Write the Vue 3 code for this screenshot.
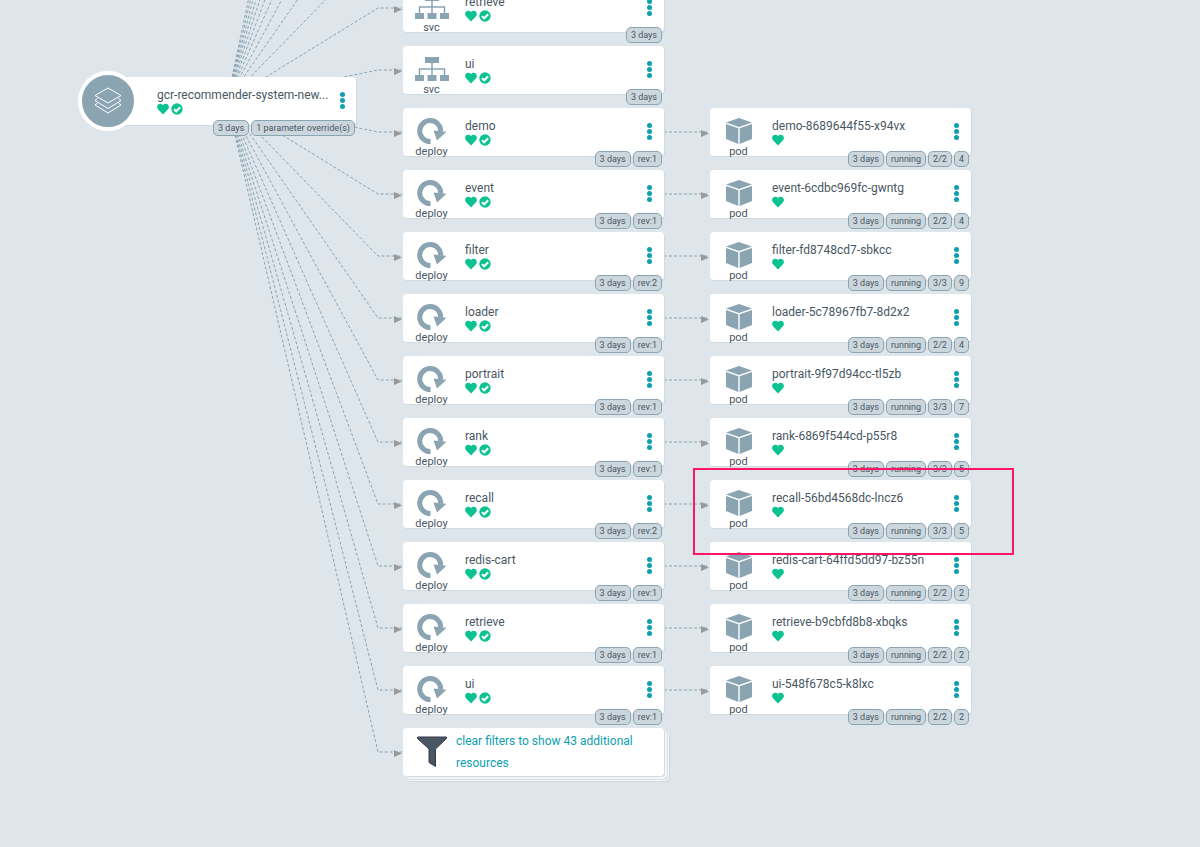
<script setup>
const rowHeight = 62
const origin = { x: 227, y: 101 }
const bend = 378
const links = Array.from({ length: 23 }, (_, i) => {
  const y = 8 + (i - 10) * rowHeight
  return { y, points: `${origin.x},${origin.y} ${bend},${y} 402,${y}` }
})

const services = [
  { name: 'retrieve', tags: ['3 days'] },
  { name: 'ui', tags: ['3 days'] },
].map((s) => ({ ...s, kind: 'svc', synced: true }))

const deployments = [
  ['demo', 1],
  ['event', 1],
  ['filter', 2],
  ['loader', 1],
  ['portrait', 1],
  ['rank', 1],
  ['recall', 2],
  ['redis-cart', 1],
  ['retrieve', 1],
  ['ui', 1],
].map(([name, rev]) => ({ name, kind: 'deploy', synced: true, tags: ['3 days', `rev:${rev}`] }))

const resources = [...services, ...deployments]

const pods = [
  ['demo-8689644f55-x94vx', '2/2', '4'],
  ['event-6cdbc969fc-gwntg', '2/2', '4'],
  ['filter-fd8748cd7-sbkcc', '3/3', '9'],
  ['loader-5c78967fb7-8d2x2', '2/2', '4'],
  ['portrait-9f97d94cc-tl5zb', '3/3', '7'],
  ['rank-6869f544cd-p55r8', '3/3', '5'],
  ['recall-56bd4568dc-lncz6', '3/3', '5'],
  ['redis-cart-64ffd5dd97-bz55n', '2/2', '2'],
  ['retrieve-b9cbfd8b8-xbqks', '2/2', '2'],
  ['ui-548f678c5-k8lxc', '2/2', '2'],
].map(([name, ready, restarts]) => ({
  name,
  kind: 'pod',
  synced: false,
  tags: ['3 days', 'running', ready, restarts],
}))

const columns = [
  { id: 'resources', nodes: resources },
  { id: 'pods', nodes: pods },
]
</script>

<template>
  <main class="tree">
    <svg class="links" width="720" height="847" aria-hidden="true">
      <g v-for="link in links" :key="link.y">
        <polyline class="link" :points="link.points" />
        <path class="arrow" :d="`M394 ${link.y - 2}l8 3.500l-8 3.500z`" />
      </g>
      <g v-for="(pod, i) in pods" :key="pod.name">
        <path class="link" :d="`M664 ${132 + i * rowHeight}H709`" />
        <path class="arrow" :d="`M701 ${130 + i * rowHeight}l8 3.500l-8 3.500z`" />
      </g>
    </svg>

    <article class="node app">
      <span class="app-icon">
        <svg width="30" height="30" viewBox="0 0 30 30" aria-hidden="true">
          <g fill="none" stroke="#fff" stroke-linejoin="round">
            <path d="M15 2L28 9.500L15 17L2 9.500z" />
            <path d="M4.500 12.500L2 14.500L15 22.500L28 14.500L25.500 12.500" />
            <path d="M4.500 17L2 19L15 27L28 19L25.500 17" />
          </g>
        </svg>
      </span>
      <div class="body">
        <span class="name">gcr-recommender-system-new...</span>
        <span class="status">
          <svg width="12" height="12" viewBox="0 0 12 12" role="img" aria-label="Healthy"><path class="ok" d="M6 11.400L1 6.300C-.4 4.700 0 2.300 1.500 1.300C3 .3 4.800.7 6 2.200C7.200.7 9 .3 10.500 1.300C12 2.300 12.400 4.700 11 6.300z" /></svg>
          <svg width="12" height="12" viewBox="0 0 12 12" role="img" aria-label="Synced"><circle class="ok" cx="6" cy="6" r="5.700" /><path class="tick" d="M3 6.200L5.200 8.300L9.200 4.200" /></svg>
        </span>
      </div>
      <button class="menu" aria-label="Application actions"><i></i><i></i><i></i></button>
      <div class="tags"><span>3 days</span><span>1 parameter override(s)</span></div>
    </article>

    <section v-for="col in columns" :key="col.id" class="column" :class="col.id">
      <article v-for="node in col.nodes" :key="node.kind + node.name" class="node">
        <div class="kind">
          <svg v-if="node.kind === 'svc'" width="34" height="34" viewBox="0 0 34 34" aria-hidden="true">
            <path class="shape" d="M10 3h14v6H10zM0 21h9v6H0zM12.500 21h9v6h-9zM25 21h9v6h-9z" />
            <path class="wire" d="M17 9v12M4.500 21v-6h25v6" />
          </svg>
          <svg v-else-if="node.kind === 'deploy'" width="34" height="34" viewBox="0 0 34 34" aria-hidden="true">
            <path class="ring" d="M15.500 25.600A10.500 10.500 0 1 1 25.700 15.500" />
            <path class="shape" d="M18.500 14.600L31.500 15.700L22 24.500z" />
          </svg>
          <svg v-else width="34" height="34" viewBox="0 0 34 34" aria-hidden="true">
            <path class="shape" d="M17 2L30 6.500L17 11L4 6.500zM4 8L16.300 12.300V28L4 23zM30 8L17.700 12.300V28L30 23z" />
          </svg>
          <span>{{ node.kind }}</span>
        </div>
        <div class="body">
          <span class="name">{{ node.name }}</span>
          <span class="status">
            <svg width="12" height="12" viewBox="0 0 12 12" role="img" aria-label="Healthy"><path class="ok" d="M6 11.400L1 6.300C-.4 4.700 0 2.300 1.500 1.300C3 .3 4.800.7 6 2.200C7.200.7 9 .3 10.500 1.300C12 2.300 12.400 4.700 11 6.300z" /></svg>
            <svg v-if="node.synced" width="12" height="12" viewBox="0 0 12 12" role="img" aria-label="Synced"><circle class="ok" cx="6" cy="6" r="5.700" /><path class="tick" d="M3 6.200L5.200 8.300L9.200 4.200" /></svg>
          </span>
        </div>
        <button class="menu" :aria-label="`Actions for ${node.name}`"><i></i><i></i><i></i></button>
        <div class="tags"><span v-for="tag in node.tags" :key="tag">{{ tag }}</span></div>
      </article>
      <article v-if="col.id === 'resources'" class="node filtered">
        <svg width="30" height="32" viewBox="0 0 30 32" aria-hidden="true">
          <path d="M.5 1H29.500V2.500L18.500 13V30.500L12 26.500V13L.5 2.500z" fill="#495763" stroke="#363c4a" />
        </svg>
        <a href="#">clear filters to show 43 additional resources</a>
      </article>
    </section>

    <div class="highlight"></div>
  </main>
</template>

<style>
body {
  margin: 0;
  background: #dee6ec;
}
</style>

<style scoped>
.tree {
  position: relative;
  min-height: 100vh;
  overflow: hidden;
  background: #dee6ec;
  color: #495763;
  font-family: Roboto, "Liberation Sans", sans-serif;
  font-size: 12px;
}
.links {
  position: absolute;
  left: 0;
  top: 0;
}
.link {
  fill: none;
  stroke: #8aa4b2;
  stroke-width: 1;
  stroke-dasharray: 3 2;
}
.arrow {
  fill: #999;
}
.column {
  position: absolute;
  display: flex;
  flex-direction: column;
  gap: 14px;
  width: 261px;
}
.resources {
  left: 403px;
  top: -16px;
}
.pods {
  left: 710px;
  top: 108px;
}
.node {
  position: relative;
  display: flex;
  box-sizing: border-box;
  width: 100%;
  height: 48px;
  border-radius: 4px;
  background: #fff;
  box-shadow: 1px 1px 1px #cfd9e0;
}
.app {
  position: absolute;
  left: 107px;
  top: 77px;
  width: 249px;
}
.app-icon {
  position: absolute;
  left: -29px;
  top: -6px;
  display: flex;
  align-items: center;
  justify-content: center;
  box-sizing: border-box;
  width: 60px;
  height: 60px;
  border: 4px solid #fff;
  border-radius: 50%;
  background: #8aa4b2;
}
.kind {
  display: flex;
  flex-direction: column;
  align-items: center;
  flex: none;
  box-sizing: border-box;
  width: 57px;
  padding-top: 8px;
}
.kind svg {
  flex: none;
}
.kind span {
  margin-top: -5px;
  font-size: 11px;
  line-height: 14px;
}
.shape {
  fill: #8aa4b2;
}
.wire {
  fill: none;
  stroke: #8aa4b2;
  stroke-width: 1.5;
}
.ring {
  fill: none;
  stroke: #8aa4b2;
  stroke-width: 5;
}
.body {
  display: flex;
  flex-direction: column;
  flex: 1;
  padding: 10px 0 0 5px;
}
.app .body {
  padding-left: 50px;
}
.name {
  line-height: 16px;
  white-space: nowrap;
}
.status {
  display: flex;
  gap: 2px;
}
.ok {
  fill: #0cc290;
}
.tick {
  fill: none;
  stroke: #fff;
  stroke-width: 2;
}
.menu {
  display: flex;
  flex-direction: column;
  align-items: center;
  justify-content: center;
  gap: 1px;
  width: 29px;
  padding: 0 0 1px;
  border: 0;
  background: none;
}
.menu i {
  box-sizing: border-box;
  width: 5px;
  height: 5px;
  border-radius: 50%;
  background: #0da0b0;
}
.tags {
  position: absolute;
  right: 2px;
  bottom: -11px;
  display: flex;
  gap: 2px;
}
.app .tags {
  right: 1px;
}
.tags span {
  box-sizing: border-box;
  height: 16px;
  padding: 0 4px;
  border: 1px solid #8aa4b2;
  border-radius: 5px;
  background: #ccd6dd;
  font-size: 9px;
  line-height: 14px;
  white-space: nowrap;
}
.filtered {
  gap: 9px;
  padding: 8px 20px 0 14px;
  box-shadow: 1px 1px 0 #d3dce2, 3px 3px 0 #f1f5f7, 4px 4px 0 #d8e1e6, 5px 5px 0 #f1f5f7, 6px 6px 1px #cfd9e0;
}
.filtered svg {
  flex: none;
}
.filtered a {
  margin-top: -6px;
  color: #0da0b0;
  line-height: 22px;
  text-decoration: none;
}
.highlight {
  position: absolute;
  left: 693px;
  top: 468px;
  box-sizing: border-box;
  width: 321px;
  height: 87px;
  border: 2px solid #ff1466;
}
</style>
